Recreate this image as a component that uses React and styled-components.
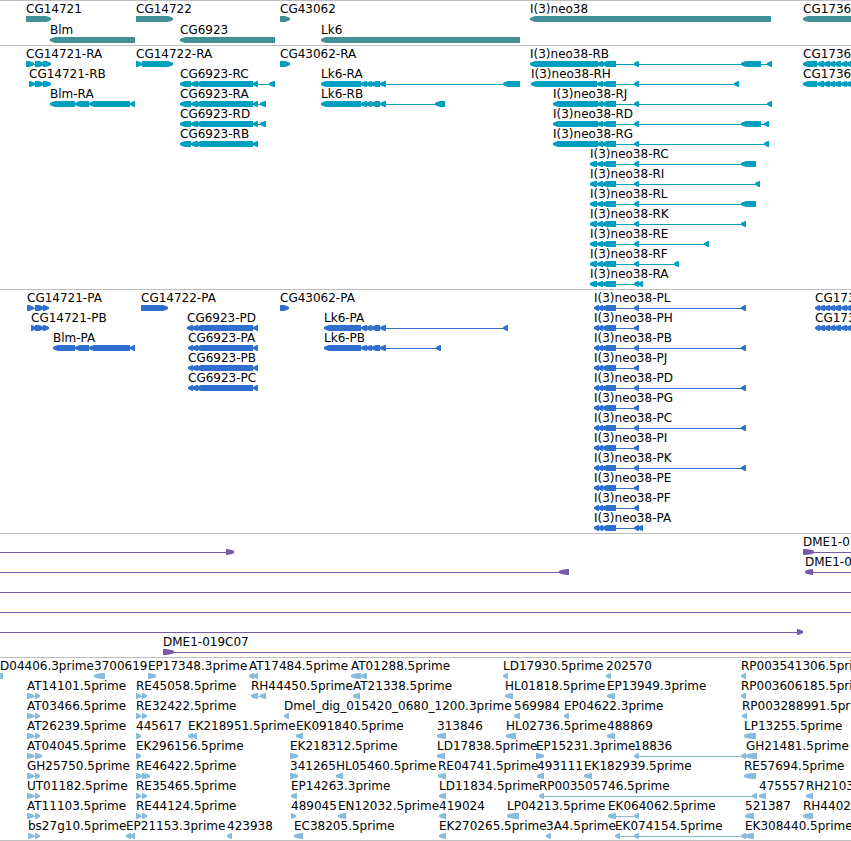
import React from "react";
import styled, { createGlobalStyle } from "styled-components";

const GlobalStyle = createGlobalStyle`
  body {
    margin: 0;
    background: white;
  }
`;

const Browser = styled.main`
  width: 100%;
  overflow: hidden;
  border-bottom: #bfbfbf 1px solid;
  font-family: "DejaVu Sans", sans-serif;
  font-size: 12px;
  line-height: 12px;
  color: black;
`;

const TrackBox = styled.section`
  border-top: #bfbfbf 1px solid;
  padding: 2px 0 ${props => props.$bottom}px 0;
  color: ${props => props.$color};
`;

const Lane = styled.div`
  position: relative;
  height: ${props => props.$height}px;
`;

// features sit at their base position along the sequence
const FeatureBox = styled.div`
  position: absolute;
  top: 0;
  left: ${props => props.$start}px;
  display: flex;
  flex-direction: column;
  gap: 1px;
`;

const Label = styled.span`
  height: 12px;
  color: black;
  white-space: nowrap;
`;

const Glyph = styled.svg`
  display: block;
  height: 6px;
  flex: none;
`;

// sequence goes on past the right edge of the window
const FAR = 2400;

const left = (label, blocks, range) => ({ label, blocks, range, dir: "left" });
const right = (label, blocks, range) => ({ label, blocks, range, dir: "right" });
const flat = (label, blocks, range) => ({ label, blocks, range, dir: "none" });

const NEO_MID = [[597, 603], [602, 616], [634, 639]];
const neo = (name, first, ...rest) =>
  left("I(3)neo38-" + name, [first, ...NEO_MID, ...rest]);
const neoR = (name, ...rest) => neo(name, [590, 597], ...rest);
const neoP = (name, ...rest) =>
  left("I(3)neo38-" + name, [[594, 599], [598, 603], [602, 616], [634, 639], ...rest]);

const LK6_MID = [[361, 367], [366, 372], [371, 380], [380, 386]];
const CG6923_R = [[180, 191], [191, 198], [196, 253], [253, 258]];
const CG6923_P = [[188, 193], [192, 198], [196, 253], [253, 258]];
const CG1736_R = [
  [803, 817], [817, 824], [823, 830], [829, 835], [834, 841], [841, 847], [846, 852], [851, 860]
];
const CG1736_P = [
  [815, 820], [819, 825], [824, 830], [829, 835], [834, 841], [841, 847], [846, 852], [851, 860]
];
const FIVE_A = [[27, 34], [35, 40]];
const FIVE_B = [[136, 141], [142, 147]];

const TRACKS = [
  {
    name: "Genes",
    color: "#409095",
    laneHeight: 21,
    bottom: 0,
    lanes: [
      [
        right("CG14721", [[26, 51]]),
        right("CG14722", [[136, 173]]),
        right("CG43062", [[280, 290]]),
        left("I(3)neo38", [[530, 771]]),
        left("CG1736", [[803, FAR]])
      ],
      [
        left("Blm", [[50, 135]]),
        left("CG6923", [[180, 275]]),
        left("Lk6", [[321, 520]])
      ]
    ]
  },
  {
    name: "Transcripts",
    color: "#009fc0",
    bottom: 1,
    lanes: [
      [
        right("CG14721-RA", [[26, 34], [35, 44], [43, 51]]),
        right("CG14722-RA", [[136, 142], [142, 173]]),
        right("CG43062-RA", [[280, 290]]),
        neo("RB", [530, 598], [741, 761], [767, 772]),
        left("CG1736", CG1736_R)
      ],
      [
        right("CG14721-RB", [[29, 35], [35, 44], [43, 51]]),
        left("CG6923-RC", [...CG6923_R, [269, 275]]),
        left("Lk6-RA", [[321, 361], ...LK6_MID, [503, 520]]),
        neo("RH", [531, 597], [734, 739]),
        left("CG1736", CG1736_R)
      ],
      [
        left("Blm-RA", [[50, 75], [75, 89], [89, 130], [130, 135]]),
        left("CG6923-RA", [...CG6923_R, [260, 266]]),
        left("Lk6-RB", [[321, 361], ...LK6_MID, [435, 445]]),
        neo("RJ", [553, 598], [767, 772])
      ],
      [
        left("CG6923-RD", [...CG6923_R, [260, 266]]),
        neo("RD", [553, 598], [741, 761], [764, 769])
      ],
      [left("CG6923-RB", CG6923_R), neo("RG", [553, 598], [764, 769])],
      [neoR("RC", [741, 756])],
      [neoR("RI", [755, 760])],
      [neoR("RL", [741, 756])],
      [neoR("RK", [741, 746])],
      [neoR("RE", [704, 709])],
      [neoR("RF", [674, 679])],
      [neoR("RA", [638, 643])]
    ]
  },
  {
    name: "Proteins",
    color: "#306fce",
    bottom: 1,
    lanes: [
      [
        right("CG14721-PA", [[27, 34], [35, 44], [43, 49]]),
        right("CG14722-PA", [[141, 168]]),
        right("CG43062-PA", [[280, 289]]),
        neoP("PL", [741, 746]),
        left("CG1736", CG1736_P)
      ],
      [
        right("CG14721-PB", [[31, 36], [35, 44], [43, 49]]),
        left("CG6923-PD", [[187, 193], ...CG6923_P.slice(1)]),
        left("Lk6-PA", [[324, 361], ...LK6_MID, [503, 508]]),
        neoP("PH"),
        left("CG1736", CG1736_P)
      ],
      [
        left("Blm-PA", [[53, 75], [75, 89], [89, 130], [130, 135]]),
        left("CG6923-PA", CG6923_P),
        left("Lk6-PB", [[324, 361], ...LK6_MID, [436, 441]]),
        neoP("PB", [741, 746])
      ],
      [left("CG6923-PB", CG6923_P), neoP("PJ")],
      [left("CG6923-PC", CG6923_P), neoP("PD", [741, 746])],
      [neoP("PG")],
      [neoP("PC", [741, 746])],
      [neoP("PI")],
      [neoP("PK", [741, 746])],
      [neoP("PE")],
      [neoP("PF")],
      [neoP("PA", [638, 643])]
    ]
  },
  {
    name: "BAC ends",
    color: "#785aaa",
    head: 8,
    bottom: 1,
    lanes: [
      [right("", [[226, 234]], [0, 234]), right("DME1-0", [[803, 814]], [803, FAR])],
      [left("", [[559, 569]], [0, 569]), left("DME1-0", [[805, 813]], [805, FAR])],
      [flat("", [], [0, FAR])],
      [flat("", [], [0, FAR])],
      [right("", [[797, 803]], [0, 803])],
      [right("DME1-019C07", [[163, 174]], [163, FAR])]
    ]
  },
  {
    name: "ESTs",
    color: "#88bcdd",
    head: 7,
    bottom: 0,
    lanes: [
      [
        flat("D04406.3prime", [[0, 3]]),
        left("3700619", [[94, 105]]),
        right("EP17348.3prime", [[148, 156]]),
        left("AT17484.5prime", [[249, 254], [253, 258]]),
        left("AT01288.5prime", [[351, 361], [361, 367]]),
        left("LD17930.5prime", [[503, 508]]),
        left("202570", [[606, 611]]),
        left("RP003541306.5prime", [[741, 746]])
      ],
      [
        right("AT14101.5prime", FIVE_A),
        right("RE45058.5prime", FIVE_B),
        left("RH44450.5prime", [[251, 258], [260, 266]]),
        left("AT21338.5prime", [[353, 360]]),
        left("HL01818.5prime", [[505, 513]]),
        left("EP13949.3prime", [[607, 615]]),
        left("RP003606185.5prime", [[741, 746]])
      ],
      [
        right("AT03466.5prime", FIVE_A),
        right("RE32422.5prime", FIVE_B),
        left("Dmel_dig_015420_0680_1200.3prime", [[284, 289]]),
        left("569984", [[514, 520]]),
        left("EP04622.3prime", [[564, 569]]),
        left("RP003288991.5prime", [[742, 747]])
      ],
      [
        right("AT26239.5prime", FIVE_A),
        right("445617", [[136, 141]]),
        left("EK218951.5prime", [[188, 193], [192, 197]]),
        left("EK091840.5prime", [[296, 303]]),
        left("313846", [[437, 446]]),
        left("HL02736.5prime", [[506, 516]]),
        left("488869", [[607, 615]]),
        left("LP13255.5prime", [[744, 756]])
      ],
      [
        right("AT04045.5prime", [[27, 34], [35, 42]]),
        right("EK296156.5prime", [[136, 141]]),
        right("EK218312.5prime", [[290, 298]]),
        left("LD17838.5prime", [[437, 445]]),
        right("EP15231.3prime", [[536, 544]]),
        left("18836", [[634, 639], [741, 746]]),
        left("GH21481.5prime", [[746, 757]])
      ],
      [
        right("GH25750.5prime", FIVE_A),
        right("RE46422.5prime", [[136, 142], [142, 150]]),
        right("341265", [[290, 298]]),
        left("HL05460.5prime", [[336, 343]]),
        left("RE04741.5prime", [[438, 446]]),
        left("493111", [[537, 544]]),
        left("EK182939.5prime", [[584, 592]]),
        left("RE57694.5prime", [[744, 756]])
      ],
      [
        right("UT01182.5prime", FIVE_A),
        right("RE35465.5prime", FIVE_B),
        left("EP14263.3prime", [[291, 297]]),
        left("LD11834.5prime", [[439, 446]]),
        left("RP003505746.5prime", [[539, 544], [752, 757]]),
        left("475557", [[759, 766]]),
        left("RH2103", [[806, 813]])
      ],
      [
        right("AT11103.5prime", FIVE_A),
        right("RE44124.5prime", FIVE_B),
        right("489045", [[291, 296]]),
        left("EN12032.5prime", [[338, 346]]),
        left("419024", [[439, 446]]),
        left("LP04213.5prime", [[507, 519]]),
        left("EK064062.5prime", [[608, 616], [634, 639]]),
        left("521387", [[745, 754]]),
        left("RH4402", [[803, 813]])
      ],
      [
        right("bs27g10.5prime", [[28, 34], [35, 40]]),
        left("EP21153.3prime", [[126, 131], [130, 135]]),
        left("423938", [[227, 232]]),
        left("EC38205.5prime", [[294, 303]]),
        left("EK270265.5prime", [[439, 446]]),
        left("3A4.5prime", [[546, 551]]),
        left("EK074154.5prime", [[615, 620], [634, 639], [741, 746]]),
        left("EK308440.5prime", [[745, 754]])
      ]
    ]
  }
];

// blunt arrow head, at least one pixel of the block keeps its full height
const blockPoints = ([a, b], dir, head) => {
  const h = Math.min(head, b - a - 1);
  if (dir === "left") {
    return `${a},2 ${a + 2},1 ${a + h},0 ${b},0 ${b},6 ${a + h},6 ${a + 2},5 ${a},4`;
  }
  if (dir === "right") {
    return `${b},2 ${b - 2},1 ${b - h},0 ${a},0 ${a},6 ${b - h},6 ${b - 2},5 ${b},4`;
  }
  return `${a},0 ${b},0 ${b},6 ${a},6`;
};

const Feature = ({ label, blocks, range, dir, head }) => {
  const start = range ? range[0] : blocks[0][0];
  const end = range ? range[1] : blocks[blocks.length - 1][1];

  return (
    <FeatureBox $start={start}>
      <Label>{label}</Label>
      <Glyph
        width={end - start}
        height="6"
        viewBox={`${start} 0 ${end - start} 6`}
        fill="currentColor"
        aria-hidden="true"
      >
        <rect x={start} y="3" width={end - start} height="1" />
        {blocks.map(block => (
          <polygon key={block[0]} points={blockPoints(block, dir, head)} />
        ))}
      </Glyph>
    </FeatureBox>
  );
};

const Track = ({ name, color, lanes, bottom, laneHeight = 20, head = 5 }) => (
  <TrackBox $color={color} $bottom={bottom} aria-label={name}>
    {lanes.map((features, i) => (
      <Lane key={i} $height={laneHeight}>
        {features.map(feature => (
          <Feature key={feature.label + feature.dir} head={head} {...feature} />
        ))}
      </Lane>
    ))}
  </TrackBox>
);

const App = () => (
  <Browser>
    <GlobalStyle />
    {TRACKS.map(track => (
      <Track key={track.name} {...track} />
    ))}
  </Browser>
);

export default App;
